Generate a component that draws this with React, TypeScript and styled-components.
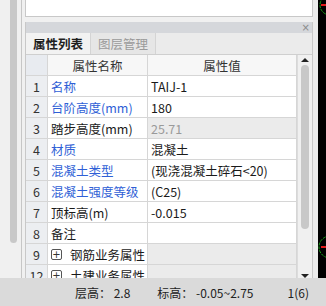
import React from "react";
import styled, { createGlobalStyle } from "styled-components";

const Global = createGlobalStyle`
  html, body { margin: 0; padding: 0; background: #f0f0f0; }
  body { font-family: "Noto Sans CJK SC", "Noto Sans", sans-serif; }
  * { box-sizing: border-box; }
`;

const Page = styled.div`
  width: 326px;
  height: 306px;
  display: flex;
  flex-direction: column;
  overflow: hidden;
  background: #f0f0f0;
`;

const Main = styled.div`
  height: 278px;
  display: flex;
  flex-direction: row;
`;

const LeftStrip = styled.div`
  width: 22px;
  border-right: 1px solid #c6c6c6;
  padding-left: 10px;
`;

const LeftThumb = styled.div`
  width: 7px;
  height: 243px;
  background: #c8c8c8;
  border-radius: 0 0 4px 4px;
`;

const Center = styled.div`
  width: 288px;
  margin-left: 3px;
  display: flex;
  flex-direction: column;
`;

const TopBox = styled.div`
  height: 17px;
  background: #fff;
  border: 1px solid #c8c8c8;
  border-top: none;
`;

const Panel = styled.div`
  margin-top: 5px;
  flex: 1;
  display: flex;
  flex-direction: column;
  border-left: 1px solid #c8c8c8;
  border-right: 1px solid #c8c8c8;
  overflow: hidden;
`;

const PanelHeader = styled.div`
  height: 11px;
  background: #d5d7db;
  display: flex;
  justify-content: flex-end;
  align-items: center;
  padding-right: 2px;
  color: #8a8a8a;
  font-family: "DejaVu Sans", sans-serif;
  font-size: 10px;
  line-height: 11px;
`;

const Tabs = styled.div`
  height: 22px;
  display: flex;
  background: #ebebeb;
  border-bottom: 1px solid #cfcfcf;
`;

const Tab = styled.div<{ $active?: boolean }>`
  padding: 0 7px;
  display: flex;
  align-items: center;
  font-size: 12.5px;
  color: ${(p) => (p.$active ? "#1e1e1e" : "#9a9a9a")};
  font-weight: ${(p) => (p.$active ? 600 : 400)};
  background: ${(p) => (p.$active ? "#f2f2f2" : "#e6e6e6")};
  border-right: 1px solid #d4d4d4;
`;

const Body = styled.div`
  flex: 1;
  display: flex;
  flex-direction: row;
  overflow: hidden;
`;

const Table = styled.div`
  width: 271px;
  display: grid;
  grid-template-columns: 22px 100px 149px;
  grid-auto-rows: 21px;
  align-content: start;
  background: #fff;
`;

const Cell = styled.div<{ $kind?: "idx" | "head" | "val"; $gray?: boolean; $color?: string; $center?: boolean }>`
  display: flex;
  align-items: center;
  justify-content: ${(p) => (p.$center ? "center" : "flex-start")};
  padding-left: ${(p) => (p.$center ? "0" : "3px")};
  border-right: 1px solid #d6d6d6;
  border-bottom: 1px solid #d6d6d6;
  font-size: 12.5px;
  white-space: nowrap;
  overflow: hidden;
  color: ${(p) => p.$color || "#1a1a1a"};
  background: ${(p) =>
    p.$kind === "idx" ? "#eceef1" : p.$kind === "head" ? "#f7f7f7" : p.$gray ? "#ebebeb" : "#fff"};
`;

const IdxHead = styled(Cell)`
  background: #e8ebf0;
`;

const HeadText = styled.span`
  color: #333;
`;

const PlusBox = styled.span`
  width: 11px;
  height: 11px;
  border: 1px solid #555;
  border-radius: 2px;
  display: inline-flex;
  align-items: center;
  justify-content: center;
  margin-right: 8px;
  font-family: "DejaVu Sans", sans-serif;
  font-size: 10px;
  line-height: 9px;
  color: #333;
`;

const ScrollTrack = styled.div`
  width: 15px;
  display: flex;
  flex-direction: column;
  align-items: center;
  background: #f0f0f0;
  border-left: 1px solid #dcdcdc;
  padding-top: 3px;
`;

const Arrow = styled.div<{ $down?: boolean }>`
  width: 0;
  height: 0;
  border-left: 4px solid transparent;
  border-right: 4px solid transparent;
  ${(p) => (p.$down ? "border-top: 4px solid #222;" : "border-bottom: 4px solid #222;")}
`;

const Thumb = styled.div`
  margin-top: 3px;
  width: 8px;
  height: 164px;
  background: #c8c8c8;
  border-radius: 4px;
`;

const Spacer = styled.div`
  flex: 1;
`;

const Gutter = styled.div`
  width: 5px;
  background: #ececec;
`;

const Canvas = styled.div`
  flex: 1;
  background: #000;
`;

const StatusBar = styled.div`
  height: 28px;
  background: #dadada;
  display: flex;
  align-items: center;
  font-size: 12px;
  color: #222;
`;

const StatusItem = styled.span<{ $left: number }>`
  margin-left: ${(p) => p.$left}px;
  white-space: pre;
`;

type Row = { n: string; name: string; val: string; blue?: boolean; gray?: boolean; grayText?: boolean; group?: boolean };

const rows: Row[] = [
  { n: "1", name: "名称", val: "TAIJ-1", blue: true },
  { n: "2", name: "台阶高度(mm)", val: "180", blue: true },
  { n: "3", name: "踏步高度(mm)", val: "25.71", gray: true, grayText: true },
  { n: "4", name: "材质", val: "混凝土", blue: true },
  { n: "5", name: "混凝土类型", val: "(现浇混凝土碎石<20)", blue: true },
  { n: "6", name: "混凝土强度等级", val: "(C25)", blue: true },
  { n: "7", name: "顶标高(m)", val: "-0.015" },
  { n: "8", name: "备注", val: "" },
  { n: "9", name: "钢筋业务属性", val: "", gray: true, group: true },
  { n: "12", name: "土建业务属性", val: "", gray: true, group: true },
];

function CanvasArt() {
  return (
    <svg width="8" height="278" viewBox="0 0 8 278">
      <circle cx="12" cy="5" r="10" fill="none" stroke="#1aa01a" strokeWidth="1" strokeDasharray="3 1" />
      <line x1="3" y1="5" x2="8" y2="5" stroke="#e01818" strokeWidth="2" />
      <circle cx="12" cy="247" r="11" fill="none" stroke="#1aa01a" strokeWidth="1" strokeDasharray="3 1" />
      <line x1="3" y1="247" x2="8" y2="247" stroke="#e01818" strokeWidth="2" />
    </svg>
  );
}

export default function App() {
  return (
    <Page>
      <Global />
      <Main>
        <LeftStrip>
          <LeftThumb />
        </LeftStrip>
        <Center>
          <TopBox />
          <Panel>
            <PanelHeader>×</PanelHeader>
            <Tabs>
              <Tab $active>属性列表</Tab>
              <Tab>图层管理</Tab>
            </Tabs>
            <Body>
              <Table>
                <IdxHead $kind="idx" />
                <Cell $kind="head" $center>
                  <HeadText>属性名称</HeadText>
                </Cell>
                <Cell $kind="head" $center>
                  <HeadText>属性值</HeadText>
                </Cell>
                {rows.map((r) => (
                  <React.Fragment key={r.n}>
                    <Cell $kind="idx" $center $color="#333">
                      {r.n}
                    </Cell>
                    <Cell $color={r.blue ? "#2f5fd6" : "#1a1a1a"}>
                      {r.group && <PlusBox>+</PlusBox>}
                      {r.name}
                    </Cell>
                    <Cell $kind="val" $gray={r.gray} $color={r.grayText ? "#9a9a9a" : "#1a1a1a"}>
                      {r.val}
                    </Cell>
                  </React.Fragment>
                ))}
              </Table>
              <ScrollTrack>
                <Arrow />
                <Thumb />
                <Spacer />
                <Arrow $down />
              </ScrollTrack>
            </Body>
          </Panel>
        </Center>
        <Gutter />
        <Canvas>
          <CanvasArt />
        </Canvas>
      </Main>
      <StatusBar>
        <StatusItem $left={75}>层高： 2.8</StatusItem>
        <StatusItem $left={27}>标高： -0.05~2.75</StatusItem>
        <StatusItem $left={34}>1(6)</StatusItem>
      </StatusBar>
    </Page>
  );
}
